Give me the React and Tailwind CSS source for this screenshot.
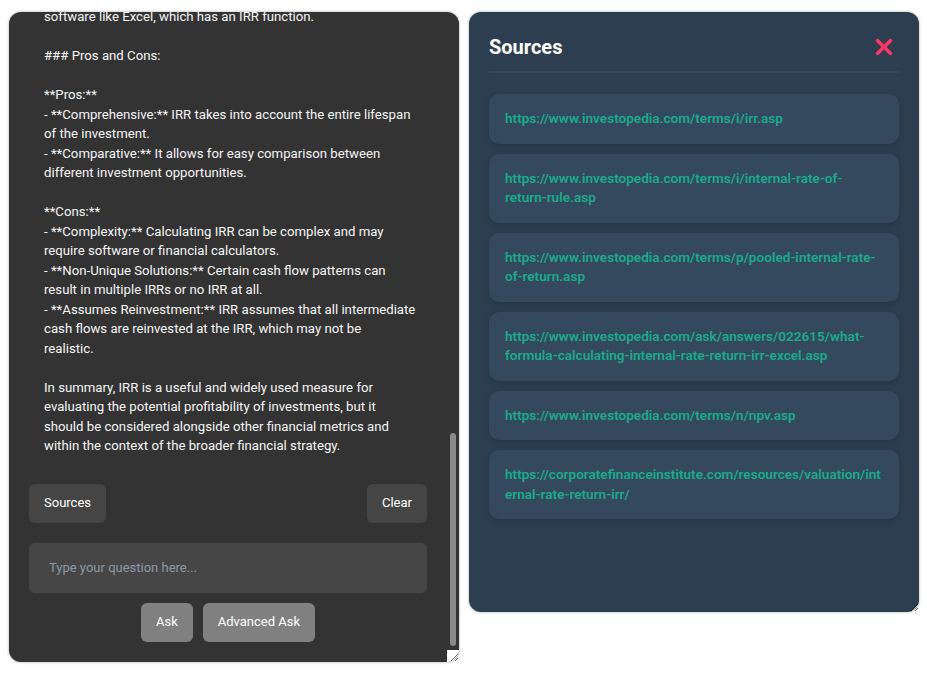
import React, { useLayoutEffect, useRef } from "react";
import { X } from "lucide-react";

const answer = `**Internal Rate of Return (IRR)**

The Internal Rate of Return (IRR) is a financial metric used to estimate the profitability of potential investments. It is the discount rate that makes the net present value (NPV) of all cash flows from a particular project or investment equal to zero. In other words, IRR is the expected compound annual rate of return that will be earned on a project or investment.

### Key Concepts:

1. **Definition:** IRR is the rate at which the present value of future cash inflows equals the initial investment outlay, so the project breaks even in present value terms.

2. **Formula:** The IRR is found by solving the equation:
   0 = Σ (CFt / (1 + IRR)^t) - C0
   where CFt is the cash flow at time t, C0 is the initial investment and t is the time period.

3. **Decision Rule:**
- If the IRR is greater than the required rate of return (or cost of capital), the investment is generally considered acceptable.
- If the IRR is lower than the required rate of return, the investment should typically be rejected.

4. **Comparison with NPV:** While NPV gives the absolute dollar value added by a project, IRR expresses the return as a percentage, which makes it easier to compare projects of different sizes.

### Example:

Suppose you invest $1,000 today and expect to receive $300 at the end of each year for the next five years. The IRR is the discount rate that makes the present value of those five payments equal to $1,000, which in this case is approximately 15.2%.

### Calculation:

Because the IRR equation cannot be solved analytically for most cash flow patterns, it is usually calculated through an iterative trial-and-error process, using financial calculators or
software like Excel, which has an IRR function.

### Pros and Cons:

**Pros:**
- **Comprehensive:** IRR takes into account the entire lifespan
of the investment.
- **Comparative:** It allows for easy comparison between
different investment opportunities.

**Cons:**
- **Complexity:** Calculating IRR can be complex and may
require software or financial calculators.
- **Non-Unique Solutions:** Certain cash flow patterns can
result in multiple IRRs or no IRR at all.
- **Assumes Reinvestment:** IRR assumes that all intermediate
cash flows are reinvested at the IRR, which may not be
realistic.

In summary, IRR is a useful and widely used measure for
evaluating the potential profitability of investments, but it
should be considered alongside other financial metrics and
within the context of the broader financial strategy.`;

const sources = [
  "https://www.investopedia.com/terms/i/irr.asp",
  "https://www.investopedia.com/terms/i/internal-rate-of-return-rule.asp",
  "https://www.investopedia.com/terms/p/pooled-internal-rate-of-return.asp",
  "https://www.investopedia.com/ask/answers/022615/what-formula-calculating-internal-rate-return-irr-excel.asp",
  "https://www.investopedia.com/terms/n/npv.asp",
  "https://corporatefinanceinstitute.com/resources/valuation/internal-rate-return-irr/",
];

const ChatPanel = () => {
  const scrollRef = useRef(null);

  // keep the answer scrolled to the bottom, like after a reply arrives
  useLayoutEffect(() => {
    if (scrollRef.current) {
      scrollRef.current.scrollTop = scrollRef.current.scrollHeight;
    }
  }, []);

  return (
    <div className="relative w-[450px] h-[650px] shrink-0 bg-[#333333] rounded-xl overflow-hidden resize shadow-[0_0_3px_rgba(0,0,0,0.35)]">
      <div ref={scrollRef} className="h-full overflow-hidden">
        <div className="pl-5 pr-8 pt-5 pb-5 flex flex-col">
          <div className="pl-[15px] pr-2 text-[13.2px] leading-[19.5px] text-[#f5f5f5] whitespace-pre-wrap">
            {answer}
          </div>

          <div className="mt-[28px] flex justify-between">
            <button
              type="button"
              className="h-[39px] px-[15px] bg-[#454545] text-white text-[13px] rounded-md"
            >
              Sources
            </button>
            <button
              type="button"
              className="h-[39px] px-[15px] bg-[#454545] text-white text-[13px] rounded-md"
            >
              Clear
            </button>
          </div>

          <input
            type="text"
            placeholder="Type your question here..."
            className="mt-5 h-[50px] w-full px-5 bg-[#464646] rounded-md text-[13px] text-white placeholder:text-[#8b99a6] outline-none"
          />

          <div className="mt-[10px] flex justify-center gap-[10px]">
            <button
              type="button"
              className="h-[39px] px-[15px] bg-[#808080] text-white text-[13px] rounded-md"
            >
              Ask
            </button>
            <button
              type="button"
              className="h-[39px] px-[15px] bg-[#808080] text-white text-[13px] rounded-md"
            >
              Advanced Ask
            </button>
          </div>
        </div>
      </div>
      {/* scrollbar thumb, sits over the scrolled content */}
      <div className="absolute right-[3px] top-[421px] w-[6px] h-[213px] rounded-full bg-[#8a8a8a]" />
      <div className="absolute right-0 bottom-0 w-3 h-3 bg-white" />
    </div>
  );
};

const SourcesPanel = () => {
  return (
    <div className="w-[450px] h-[600px] shrink-0 bg-[#2c3e50] rounded-xl overflow-auto resize p-5 shadow-[0_0_3px_rgba(0,0,0,0.35)]">
      <div className="flex justify-between items-center pt-[1px] pb-[10px] border-b-2 border-[#34495e]">
        <h2 className="text-[20px] leading-7 font-bold text-white">Sources</h2>
        <button type="button" className="text-[#ff3566] mr-[2px]">
          <X size={26} strokeWidth={3.2} />
        </button>
      </div>
      <div className="mt-[21px] flex flex-col gap-[10px]">
        {sources.map((url) => (
          <div
            key={url}
            className="px-4 py-[15px] bg-[#34495e] rounded-[10px] shadow-[0_2px_6px_rgba(0,0,0,0.15)]"
          >
            <a
              href={url}
              className="block text-[13.6px] leading-[19.5px] font-semibold text-[#1aab8b] break-words"
            >
              {url}
            </a>
          </div>
        ))}
      </div>
    </div>
  );
};

export default function App() {
  return (
    <div className="min-h-screen bg-white pl-[9px] pt-3 flex items-start gap-[10px] font-['Roboto',_'Noto_Sans',_sans-serif]">
      <ChatPanel />
      <SourcesPanel />
    </div>
  );
}
